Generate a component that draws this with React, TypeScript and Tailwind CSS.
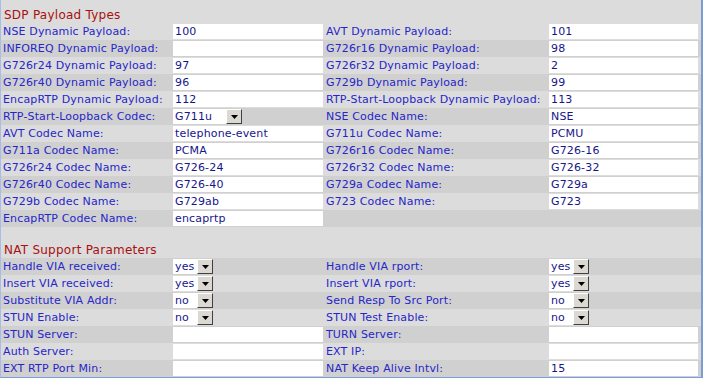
import React from "react";

type Cell =
  | { k: "in"; v: string }
  | { k: "sel"; v: string; w: "s" | "l" }
  | { k: "none" };

type Row = [string, Cell, string, Cell];

const inp = (v: string): Cell => ({ k: "in", v });
const sel = (v: string, w: "s" | "l" = "s"): Cell => ({ k: "sel", v, w });
const none: Cell = { k: "none" };

const sdpRows: Row[] = [
  ["NSE Dynamic Payload:", inp("100"), "AVT Dynamic Payload:", inp("101")],
  ["INFOREQ Dynamic Payload:", inp(""), "G726r16 Dynamic Payload:", inp("98")],
  ["G726r24 Dynamic Payload:", inp("97"), "G726r32 Dynamic Payload:", inp("2")],
  ["G726r40 Dynamic Payload:", inp("96"), "G729b Dynamic Payload:", inp("99")],
  ["EncapRTP Dynamic Payload:", inp("112"), "RTP-Start-Loopback Dynamic Payload:", inp("113")],
  ["RTP-Start-Loopback Codec:", sel("G711u", "l"), "NSE Codec Name:", inp("NSE")],
  ["AVT Codec Name:", inp("telephone-event"), "G711u Codec Name:", inp("PCMU")],
  ["G711a Codec Name:", inp("PCMA"), "G726r16 Codec Name:", inp("G726-16")],
  ["G726r24 Codec Name:", inp("G726-24"), "G726r32 Codec Name:", inp("G726-32")],
  ["G726r40 Codec Name:", inp("G726-40"), "G729a Codec Name:", inp("G729a")],
  ["G729b Codec Name:", inp("G729ab"), "G723 Codec Name:", inp("G723")],
  ["EncapRTP Codec Name:", inp("encaprtp"), "", none],
];

const natRows: Row[] = [
  ["Handle VIA received:", sel("yes"), "Handle VIA rport:", sel("yes")],
  ["Insert VIA received:", sel("yes"), "Insert VIA rport:", sel("yes")],
  ["Substitute VIA Addr:", sel("no"), "Send Resp To Src Port:", sel("no")],
  ["STUN Enable:", sel("no"), "STUN Test Enable:", sel("no")],
  ["STUN Server:", inp(""), "TURN Server:", inp("")],
  ["Auth Server:", inp(""), "EXT IP:", inp("")],
  ["EXT RTP Port Min:", inp(""), "NAT Keep Alive Intvl:", inp("15")],
];

function Arrow() {
  return (
    <div className="w-[16px] h-[15px] bg-[#dcd9d2] border-t border-l border-t-white border-l-white border-r border-b border-r-[#404040] border-b-[#404040] flex items-center justify-center shrink-0">
      <svg width="7" height="4" viewBox="0 0 7 4">
        <polygon points="0,0 7,0 3.5,4" fill="#000" />
      </svg>
    </div>
  );
}

function CellView({ c }: { c: Cell }) {
  if (c.k === "none") return <div />;
  if (c.k === "in")
    return (
      <div className="h-[15px] bg-white pl-[2px] text-[#16168a] leading-[15px] whitespace-nowrap">
        {c.v}
      </div>
    );
  return (
    <div
      className={
        "h-[15px] bg-white flex items-center justify-between " +
        (c.w === "l" ? "w-[69px]" : "w-[40px]")
      }
    >
      <span className="pl-[2px] text-[#16168a] leading-[15px]">{c.v}</span>
      <Arrow />
    </div>
  );
}

function RowView({ r, dark }: { r: Row; dark: boolean }) {
  return (
    <div
      className={
        "grid grid-cols-[172px_150px_226px_149px] h-[17px] items-center pr-[3px] " +
        (dark ? "bg-[#d0d0d0]" : "bg-[#dcdcdc]")
      }
    >
      <div className="pl-[2px] text-[#2626c8] whitespace-nowrap leading-[15px]">{r[0]}</div>
      <CellView c={r[1]} />
      <div className="pl-[3px] text-[#2626c8] whitespace-nowrap leading-[15px]">{r[2]}</div>
      <CellView c={r[3]} />
    </div>
  );
}

function Title({ children }: { children: React.ReactNode }) {
  return (
    <div className="h-[17px] flex items-center pl-[3px] text-[12px] tracking-[0.25px] text-[#a81010]">
      {children}
    </div>
  );
}

export default function App() {
  return (
    <div
      className="w-[703px] h-[378px] bg-[#dcdcdc] border-l border-l-[#a8bce6] border-r-2 border-r-[#7a9cd8] border-b border-b-[#7a9cd8] pt-[6px] flex flex-col overflow-hidden text-[11px] tracking-[0.15px]"
      style={{ fontFamily: '"DejaVu Sans", Verdana, sans-serif' }}
    >
      <Title>SDP Payload Types</Title>
      {sdpRows.map((r, i) => (
        <RowView key={i} r={r} dark={i % 2 === 1} />
      ))}
      <div className="h-[14px]" />
      <Title>NAT Support Parameters</Title>
      {natRows.map((r, i) => (
        <RowView key={i} r={r} dark={i % 2 === 0} />
      ))}
    </div>
  );
}
